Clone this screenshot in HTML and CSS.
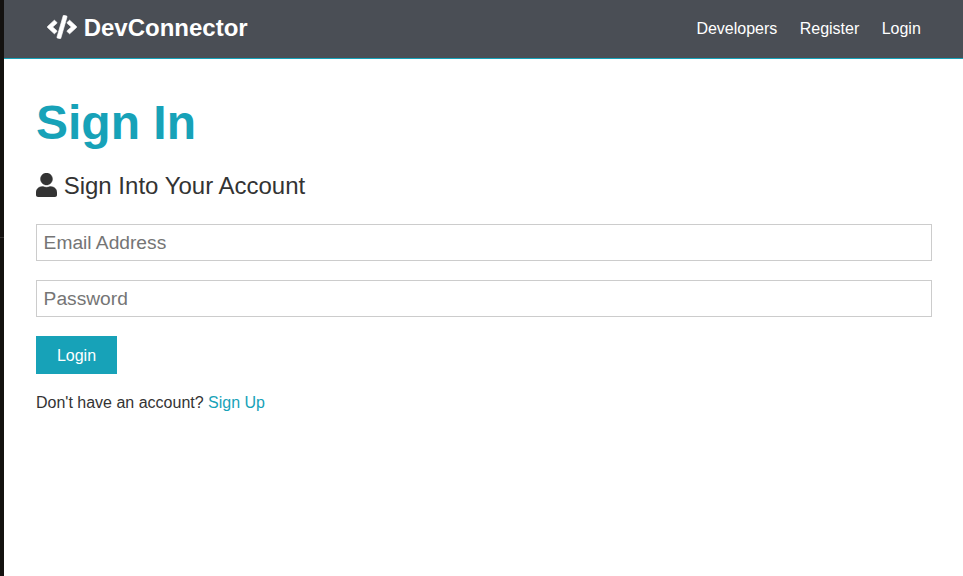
FILE: index.html
```html
<!DOCTYPE html>
<html lang="en">
<head>
<meta charset="utf-8">
<title>DevConnector</title>
<link rel="stylesheet" href="styles.css">
</head>
<body>
<nav class="navbar">
  <h1 class="brand"><a href="#"><svg class="icon-code" viewBox="-6 -5 652 522" aria-hidden="true"><path fill="currentColor" stroke="currentColor" stroke-width="14" d="M278.900 511.500l-61-17.700c-6.400-1.800-10-8.500-8.200-14.900L346.200 8.700c1.800-6.400 8.500-10 14.900-8.200l61 17.700c6.400 1.800 10 8.500 8.200 14.900L293.800 503.300c-1.900 6.400-8.500 10.100-14.900 8.200zm-114-112.200l43.500-46.400c4.600-4.900 4.300-12.700-.8-17.200L117 256l90.600-79.700c5.100-4.500 5.500-12.300.8-17.200l-43.500-46.400c-4.500-4.800-12.100-5.100-17-.5L3.800 247.200c-5.100 4.700-5.100 12.800 0 17.500l144.100 135.100c4.900 4.600 12.500 4.400 17-.5zm327.200.6l144.100-135.100c5.100-4.700 5.100-12.800 0-17.500L492.100 112.100c-4.800-4.500-12.400-4.300-17 .5L431.600 159c-4.600 4.900-4.300 12.700.8 17.200L523 256l-90.600 79.700c-5.100 4.500-5.500 12.300-.8 17.200l43.500 46.400c4.500 4.900 12.100 5.100 17 .6z"/></svg> DevConnector</a></h1>
  <ul class="links">
    <li><a href="#">Developers</a></li>
    <li><a href="#">Register</a></li>
    <li><a href="#">Login</a></li>
  </ul>
</nav>
<main class="container">
  <h1 class="title">Sign In</h1>
  <p class="lead"><svg class="icon-user" viewBox="0 0 448 512" aria-hidden="true"><path fill="currentColor" stroke="currentColor" stroke-width="8" d="M224 256c70.700 0 128-57.300 128-128S294.700 0 224 0 96 57.300 96 128s57.300 128 128 128zm89.600 32h-16.700c-22.200 10.200-46.900 16-72.900 16s-50.600-5.800-72.900-16h-16.700C60.200 288 0 348.200 0 422.400V464c0 26.500 21.500 48 48 48h352c26.500 0 48-21.500 48-48v-41.600c0-74.200-60.200-134.400-134.400-134.400z"/></svg> Sign Into Your Account</p>
  <form class="form">
    <input type="email" placeholder="Email Address">
    <input type="password" placeholder="Password">
    <button class="btn" type="button">Login</button>
  </form>
  <p class="signup">Don't have an account? <a href="#">Sign Up</a></p>
</main>
</body>
</html>
```
FILE: styles.css
```css
* {
  box-sizing: border-box;
  margin: 0;
  padding: 0;
}

body {
  min-height: 100vh;
  border-left: 4px solid #141210;
  font-family: "Liberation Sans", Arial, sans-serif;
  font-size: 16px;
  line-height: 1.6;
  color: #333;
  background: #fff;
}

/* thin divider in the dark edge strip */
body::before {
  content: "";
  position: absolute;
  top: 237px;
  left: 0;
  width: 4px;
  height: 1px;
  background: #33312f;
}

a {
  color: #17a2b8;
  text-decoration: none;
}

.navbar {
  display: flex;
  justify-content: space-between;
  align-items: center;
  height: 59px;
  padding: 0 31px 2px 43px;
  background: #4a4e55;
  border-bottom: 1px solid #17a2b8;
}

.navbar a {
  color: #fff;
}

.brand {
  font-size: 24px;
  line-height: 38px;
}

.icon-code {
  width: 30px;
  height: 24px;
  vertical-align: -3px;
}

.links {
  display: flex;
  padding-top: 2px;
  list-style: none;
}

.links a {
  padding: 0 11.2px;
}

.container {
  padding: 35px 31px 0 32px;
}

.title {
  margin-bottom: 15px;
  font-size: 48px;
  line-height: 58px;
  color: #17a2b8;
}

.lead {
  margin-bottom: 19px;
  font-size: 24px;
  line-height: 38px;
}

.icon-user {
  width: 21px;
  height: 24px;
  vertical-align: -3px;
}

.form input {
  display: block;
  width: 100%;
  height: 37px;
  margin-bottom: 19px;
  padding: 6.6px;
  border: 1px solid #ccc;
  font-family: inherit;
  font-size: 19.2px;
}

.btn {
  display: block;
  width: 81px;
  height: 38px;
  padding-top: 1px;
  border: none;
  font: inherit;
  color: #fff;
  background: #17a2b8;
}

.signup {
  margin-top: 16px;
}
```
